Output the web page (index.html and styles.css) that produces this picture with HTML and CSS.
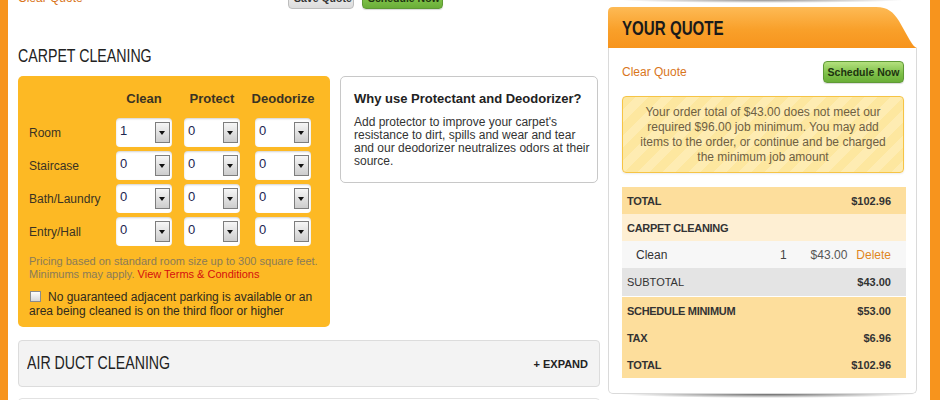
FILE: index.html
```html
<!DOCTYPE html>
<html>
<head>
<meta charset="utf-8">
<link rel="stylesheet" href="styles.css">
</head>
<body>
<div class="page">
  <div class="strip strip-left"></div>
  <main class="main">
    <div class="toolbar">
      <a class="link-orange">Clear Quote</a>
      <div class="btns">
        <span class="btn btn-gray">Save Quote</span>
        <span class="btn btn-green">Schedule Now</span>
      </div>
    </div>
    <h2 class="section-title"><span class="narrow">CARPET CLEANING</span></h2>
    <div class="carpet-row">
      <div class="carpet-panel">
        <div class="grid">
          <div></div>
          <div class="colhead">Clean</div>
          <div class="colhead">Protect</div>
          <div class="colhead">Deodorize</div>

          <div class="rowlabel">Room</div>
          <div class="cell"><div class="sel"><span class="val">1</span><span class="arr"></span></div></div>
          <div class="cell"><div class="sel"><span class="val">0</span><span class="arr"></span></div></div>
          <div class="cell"><div class="sel"><span class="val">0</span><span class="arr"></span></div></div>

          <div class="rowlabel">Staircase</div>
          <div class="cell"><div class="sel"><span class="val">0</span><span class="arr"></span></div></div>
          <div class="cell"><div class="sel"><span class="val">0</span><span class="arr"></span></div></div>
          <div class="cell"><div class="sel"><span class="val">0</span><span class="arr"></span></div></div>

          <div class="rowlabel">Bath/Laundry</div>
          <div class="cell"><div class="sel"><span class="val">0</span><span class="arr"></span></div></div>
          <div class="cell"><div class="sel"><span class="val">0</span><span class="arr"></span></div></div>
          <div class="cell"><div class="sel"><span class="val">0</span><span class="arr"></span></div></div>

          <div class="rowlabel">Entry/Hall</div>
          <div class="cell"><div class="sel"><span class="val">0</span><span class="arr"></span></div></div>
          <div class="cell"><div class="sel"><span class="val">0</span><span class="arr"></span></div></div>
          <div class="cell"><div class="sel"><span class="val">0</span><span class="arr"></span></div></div>
        </div>
        <p class="note">Pricing based on standard room size up to 300 square feet.<br>Minimums may apply. <a class="terms">View Terms &amp; Conditions</a></p>
        <p class="check"><span class="box"></span>No guaranteed adjacent parking is available or an<br>area being cleaned is on the third floor or higher</p>
      </div>
      <div class="why">
        <h3 class="why-title">Why use Protectant and Deodorizer?</h3>
        <p class="why-text">Add protector to improve your carpet's<br>resistance to dirt, spills and wear and tear<br>and our deodorizer neutralizes odors at their<br>source.</p>
      </div>
    </div>
    <div class="collapsed">
      <span class="collapsed-title"><span class="narrow">AIR DUCT CLEANING</span></span>
      <span class="expand">+&nbsp;EXPAND</span>
    </div>
    <div class="collapsed next"></div>
  </main>

  <aside class="quote">
    <div class="quote-topshadow"></div>
    <div class="quote-head">
      <svg class="quote-head-bg" width="309" height="41" viewBox="0 0 309 41" aria-hidden="true">
        <defs>
          <linearGradient id="hg" x1="0" y1="0" x2="0" y2="1">
            <stop offset="0" stop-color="#FDBA55"/>
            <stop offset="0.55" stop-color="#F9A02A"/>
            <stop offset="1" stop-color="#F7941D"/>
          </linearGradient>
        </defs>
        <path d="M0,41 L0,5 Q0,0 5,0 L268,0 C280,0 285,5 291,14 L300,30 C304,37 306,40 309,41 Z" fill="url(#hg)"/>
      </svg>
      <h2 class="quote-title"><span>YOUR QUOTE</span></h2>
    </div>
    <div class="quote-body">
      <div class="quote-actions">
        <a class="link-orange">Clear Quote</a>
        <span class="btn btn-green">Schedule Now</span>
      </div>
      <div class="alert">Your order total of $43.00 does not meet our<br>required $96.00 job minimum. You may add<br>items to the order, or continue and be charged<br>the minimum job amount</div>
      <div class="qtable">
        <div class="qrow r-total"><span class="lbl">TOTAL</span><span class="amt">$102.96</span></div>
        <div class="qrow r-cat"><span class="lbl">CARPET CLEANING</span></div>
        <div class="qrow r-item"><span class="iname">Clean</span><span class="iqty">1</span><span class="iprice">$43.00</span><a class="idel">Delete</a></div>
        <div class="qrow r-sub"><span class="lbl normal">SUBTOTAL</span><span class="amt">$43.00</span></div>
        <div class="qrow r-total r-first"><span class="lbl">SCHEDULE MINIMUM</span><span class="amt">$53.00</span></div>
        <div class="qrow r-total"><span class="lbl">TAX</span><span class="amt">$6.96</span></div>
        <div class="qrow r-total"><span class="lbl">TOTAL</span><span class="amt">$102.96</span></div>
      </div>
    </div>
    <div class="quote-bottomshadow"></div>
  </aside>
  <div class="strip strip-right"></div>
</div>
</body>
</html>
```

FILE: styles.css
```css
* { box-sizing: border-box; }
html, body { margin: 0; padding: 0; }
body {
  font-family: "Liberation Sans", Arial, sans-serif;
  color: #333;
  background: #fff;
  width: 940px;
  height: 400px;
  overflow: hidden;
}
.page { display: flex; height: 400px; align-items: flex-start; overflow: hidden; }
.strip { background: #F7941D; flex: none; height: 400px; }
.strip-left { width: 8px; }
.strip-right { width: 10px; margin-left: 13px; }

.main { width: 592px; padding-left: 10px; flex: none; }

.toolbar {
  display: flex; align-items: center; justify-content: space-between;
  width: 425px; height: 22px; margin-top: -13px;
}
.link-orange { color: #D9761C; font-size: 12px; text-decoration: none; }
.btns { display: flex; gap: 8px; }
.btn {
  display: inline-block; height: 22px; line-height: 20px; padding: 0 5px;
  font-size: 10.5px; font-weight: bold; border-radius: 4px; white-space: nowrap;
}
.btn-gray {
  width: 66px; text-align: center;
  background: linear-gradient(#f7f7f7, #dcdcdc); border: 1px solid #bdbdbd; color: #333;
}
.btn-green {
  background: linear-gradient(#b4e07e, #7cbf47 60%, #6aae38);
  border: 1px solid #5f9a35; color: #1d3310;
  box-shadow: 0 1px 1px rgba(0,0,0,.15);
}
.toolbar .btn-green { width: 81px; text-align: center; }

.narrow { display: inline-block; transform: scaleX(0.81); transform-origin: left center; white-space: nowrap; }

.section-title {
  font-weight: normal; font-size: 17.5px; line-height: 20px; color: #222;
  margin: 37px 0 10px; white-space: nowrap;
}

.carpet-row { display: flex; gap: 10px; align-items: flex-start; }
.carpet-panel {
  width: 312px; height: 251px; flex: none;
  background: #FDB924; border-radius: 5px;
  padding: 14px 19px 0 11px;
}
.grid {
  display: grid;
  grid-template-columns: 87px 68px 71px 56px;
  grid-template-rows: 24px;
  grid-auto-rows: 29px;
  row-gap: 4px;
}
.colhead {
  width: 56px; font-weight: bold; font-size: 13px;
  line-height: 18px; height: 18px; color: #3a3323; white-space: nowrap;
  display: flex; justify-content: center; align-self: start;
}
.rowlabel { font-size: 12px; color: #3a3323; display: flex; align-items: center; padding-top: 1px; }
.cell { display: flex; }
.sel {
  position: relative; width: 56px; height: 29px;
  background: #fff; border-radius: 4px;
  box-shadow: inset 0 1px 2px rgba(0,0,0,.18);
  padding: 5px 0 0 4px;
  font-size: 13px; line-height: 15px; color: #1d2650;
}
.arr {
  position: absolute; right: 2px; top: 4px; width: 15px; height: 21px;
  border: 1px solid #7d7d7d;
  background: linear-gradient(#f6f6f6, #cdcdcd);
}
.arr::after {
  content: ""; position: absolute; left: 3px; top: 8px;
  border-top: 4px solid #111; border-left: 3.5px solid transparent; border-right: 3.5px solid transparent;
}

.note {
  margin: 9px 0 0; font-size: 11px; line-height: 13px; color: #8a7b58; white-space: nowrap;
}
.terms { color: #D40F0F; text-decoration: none; }
.check {
  margin: 9px 0 0; font-size: 12px; line-height: 14px; color: #2f2a1e; white-space: nowrap;
}
.box {
  display: inline-block; width: 11px; height: 11px; vertical-align: -1px;
  margin: 0 7px 0 1px;
  border: 1px solid #8b8b8b; background: linear-gradient(#fdfdfd, #d8d8d8);
}

.why {
  width: 258px; height: 107px; flex: none;
  border: 1px solid #c8c8c8; border-radius: 5px; background: #fff;
  padding: 14px 13px 0;
}
.why-title { margin: 0 0 9px; font-size: 13px; line-height: 16px; font-weight: bold; color: #222; white-space: nowrap; }
.why-text { margin: 0; font-size: 12px; line-height: 13px; color: #333; white-space: nowrap; }

.collapsed {
  margin-top: 13px; height: 47px; width: 582px;
  background: #F3F3F3; border: 1px solid #dcdcdc; border-radius: 4px;
  display: flex; align-items: center; justify-content: space-between;
  padding: 0 11px 0 8px;
}
.collapsed-title { font-size: 17.5px; color: #222; flex: 1; }
.expand { font-size: 11px; font-weight: bold; color: #222; }
.collapsed.next { margin-top: 11px; height: 30px; background: #fff; border-color: #e2e2e2; }

.quote { width: 309px; margin-left: 8px; flex: none; position: relative; }
.quote-topshadow {
  height: 7px;
  background: radial-gradient(ellipse 46% 3px at 50% 0, rgba(0,0,0,.42), rgba(0,0,0,0)) no-repeat;
}
.quote-head { position: relative; height: 41px; }
.quote-head-bg { position: absolute; left: 0; top: 0; }
.quote-title {
  position: relative; margin: 0; padding-left: 14px;
  font-weight: bold; font-size: 21px; line-height: 41px; color: #1a1a1a;
}
.quote-title span { display: inline-block; transform: scaleX(0.72); transform-origin: left center; white-space: nowrap; }
.quote-body {
  border: 1px solid #dadada; border-top: 0; border-radius: 0 0 5px 5px;
  padding: 13px 12px 15px 13px; background: #fff;
}
.quote-actions { display: flex; justify-content: space-between; align-items: center; height: 22px; }
.quote-actions .btn { width: 81px; text-align: center; padding: 0; }
.alert {
  margin-top: 13px; height: 77px;
  border: 1px solid #F6C445; border-radius: 4px;
  background: repeating-linear-gradient(135deg, #FDE79F 0 9px, #FEECB2 9px 18px);
  box-shadow: 0 1px 2px rgba(0,0,0,.08);
  padding: 8px 4px 0; text-align: center; white-space: nowrap;
  font-size: 12px; line-height: 15px; color: #6e6043;
}
.qtable { margin-top: 14px; margin-right: -2px; }
.qrow {
  display: flex; align-items: center; justify-content: space-between;
  height: 27px; padding: 0 15px 0 5px; font-size: 11px;
}
.lbl { font-weight: bold; font-size: 11px; letter-spacing: -0.3px; color: #333; }
.lbl.normal { font-weight: normal; letter-spacing: 0; }
.amt { font-weight: bold; color: #333; }
.r-total { background: #FDDE9C; }
.r-cat { background: #FEEFD3; }
.r-item { background: #F7F7F7; font-size: 12px; padding-left: 14px; }
.r-sub { background: #E4E4E4; height: 28px; }
.r-first { border-top: 1px solid #fff; height: 28px; }
.iname { flex: 1; color: #333; }
.iqty { width: 20px; text-align: center; color: #444; }
.iprice { width: 54px; text-align: right; color: #555; }
.idel { margin-left: 9px; color: #E0861E; }
.quote-bottomshadow {
  height: 6px;
  background: radial-gradient(ellipse 48% 4px at 52% 0, rgba(0,0,0,.6), rgba(0,0,0,0)) no-repeat;
}
```
